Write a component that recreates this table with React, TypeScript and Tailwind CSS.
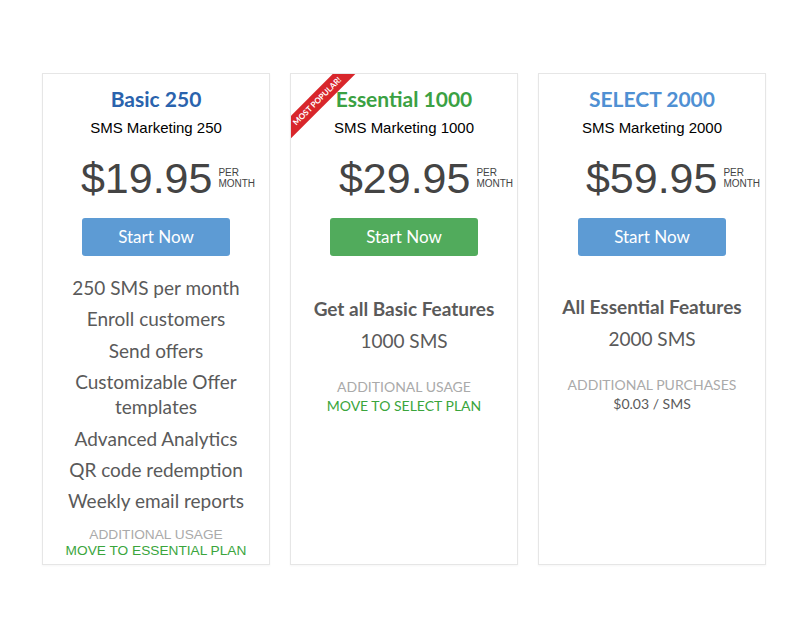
const lato = "font-['Lato','Open_Sans',sans-serif]";
const arial = "font-['Liberation_Sans',Arial,sans-serif]";

function Price({ amount, offset }: { amount: string; offset: string }) {
  return (
    <div className={`mt-[17px] flex items-center justify-center ${offset}`}>
      <span className={`${arial} text-[43px] leading-[48px] text-[#444]`}>{amount}</span>
      <span className={`${arial} ml-[6px] text-left text-[10px] leading-[11px] text-[#444]`}>
        PER
        <br />
        MONTH
      </span>
    </div>
  );
}

function StartButton({ color }: { color: string }) {
  return (
    <button
      type="button"
      className={`${lato} mx-auto mt-[16px] flex h-[38px] w-[148px] items-center justify-center rounded-[3px] text-[17px] text-white ${color}`}
    >
      Start Now
    </button>
  );
}

export default function App() {
  const basicFeatures = [
    '250 SMS per month',
    'Enroll customers',
    'Send offers',
    'Customizable Offer templates',
    'Advanced Analytics',
    'QR code redemption',
    'Weekly email reports',
  ];

  return (
    <div className="min-h-[639px] w-[800px] bg-white pl-[42px] pt-[73px]">
      <div className="flex items-stretch gap-[20px]">
        {/* Basic */}
        <div className="h-[492px] w-[228px] border border-[#e6e6e6] bg-white text-center shadow-[0_1px_2px_rgba(0,0,0,0.04)]">
          <h2 className={`${lato} mt-[12px] text-[21px] font-bold leading-[26px] text-[#2a63ad]`}>Basic 250</h2>
          <p className={`${arial} mt-[6px] text-[15px] leading-[19px] text-black`}>SMS Marketing 250</p>
          <Price amount="$19.95" offset="pl-[24px]" />
          <StartButton color="bg-[#5d9bd4]" />
          <ul className={`${lato} mt-[19px] flex flex-col gap-[6.4px] px-[20px] text-[19px] leading-[25px] text-[#5a5a5a]`}>
            {basicFeatures.map((f) => (
              <li key={f}>{f}</li>
            ))}
          </ul>
          <div className={`${arial} mt-[14px] text-[13.7px] leading-[16px]`}>
            <p className="text-[#aaa]">ADDITIONAL USAGE</p>
            <p className="text-[#3aa53c]">MOVE TO ESSENTIAL PLAN</p>
          </div>
        </div>

        {/* Essential */}
        <div className="relative h-[492px] w-[228px] overflow-hidden border border-[#e6e6e6] bg-white text-center shadow-[0_1px_2px_rgba(0,0,0,0.04)]">
          <div className="absolute left-[-26px] top-[19px] flex h-[16px] w-[104px] -rotate-45 items-center justify-center bg-[#d8262b]">
            <span className={`${lato} text-[8px] font-bold leading-none text-white`}>MOST POPULAR!</span>
          </div>
          <h2 className={`${lato} mt-[12px] text-[21px] font-bold leading-[26px] text-[#3ba143]`}>Essential 1000</h2>
          <p className={`${arial} mt-[6px] text-[15px] leading-[19px] text-black`}>SMS Marketing 1000</p>
          <Price amount="$29.95" offset="pl-[44px]" />
          <StartButton color="bg-[#51ab5c]" />
          <p className={`${lato} mt-[40px] text-[19px] font-bold leading-[25px] text-[#5a5a5a]`}>Get all Basic Features</p>
          <p className={`${lato} mt-[7px] text-[19px] leading-[25px] text-[#5a5a5a]`}>1000 SMS</p>
          <div className={`${lato} mt-[24px] text-[14px] leading-[19px]`}>
            <p className="text-[#aaa]">ADDITIONAL USAGE</p>
            <p className="text-[#3aa53c]">MOVE TO SELECT PLAN</p>
          </div>
        </div>

        {/* Select */}
        <div className="h-[492px] w-[228px] border border-[#e6e6e6] bg-white text-center shadow-[0_1px_2px_rgba(0,0,0,0.04)]">
          <h2 className={`${lato} mt-[12px] text-[21px] font-bold leading-[26px] text-[#4f90d3]`}>SELECT 2000</h2>
          <p className={`${arial} mt-[6px] text-[15px] leading-[19px] text-black`}>SMS Marketing 2000</p>
          <Price amount="$59.95" offset="pl-[42px]" />
          <StartButton color="bg-[#5d9bd4]" />
          <p className={`${lato} mt-[38px] text-[19px] font-bold leading-[25px] text-[#5a5a5a]`}>All Essential Features</p>
          <p className={`${lato} mt-[7px] text-[19px] leading-[25px] text-[#5a5a5a]`}>2000 SMS</p>
          <div className={`${lato} mt-[24px] text-[14px] leading-[19px]`}>
            <p className="text-[#aaa]">ADDITIONAL PURCHASES</p>
            <p className="text-[#5a5a5a]">$0.03 / SMS</p>
          </div>
        </div>
      </div>
    </div>
  );
}
